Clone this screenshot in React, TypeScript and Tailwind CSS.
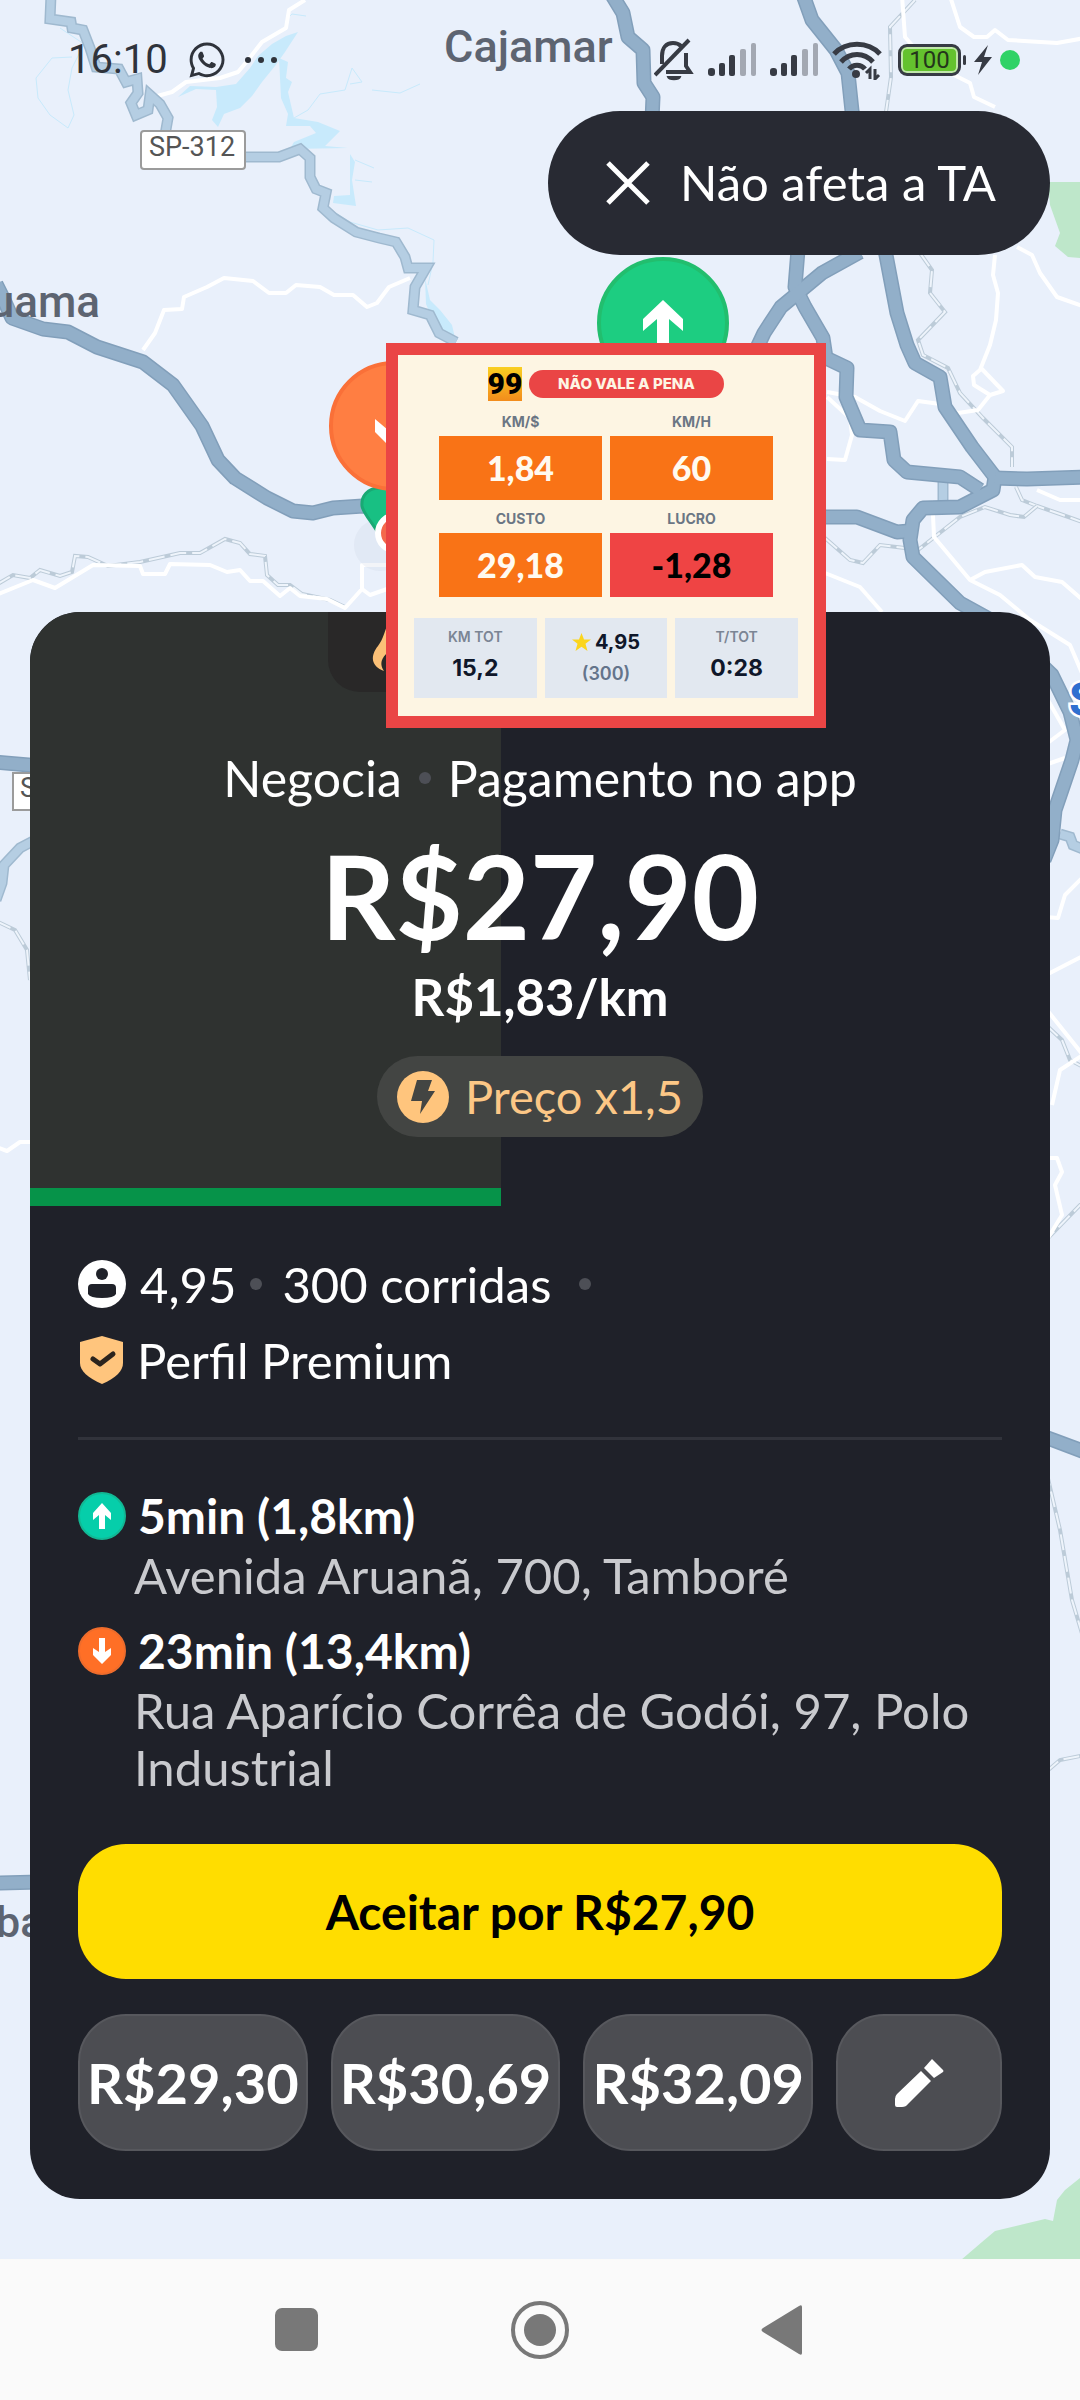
import type { ReactNode } from "react";
import { FaWhatsapp } from "react-icons/fa";

const mainRoads = [
  "M-4 284L4 300L12 318L43 329L68 332L97 347L143 362L173 385L202 426L218 460L235 478L267 498L293 511L313 513L333 508L363 506L600 512L827 517L857 517L897 532L910 531",
  "M612 -5L623 13L628 37L643 50L644 83L653 97L652 120",
  "M802 -8L812 20L836 50L848 73L852 111L886 255L897 313L907 345L915 363L940 377L945 407L972 447L995 477L993 490L960 507L923 508L913 520L910 540L913 557L960 603L1000 625L1052 675L1070 712L1077 740L1072 760L1055 810L1052 840L1044 860",
  "M995 478L1027 479L1085 477",
  "M798 250L795 287L805 307L823 338L826 358L847 368L846 397L860 430L890 432L894 460L907 472L960 477L980 490",
  "M860 252L822 273L781 307L764 333L756 350",
  "M-5 762L40 766",
  "M-5 1883L40 1882",
  "M1045 1437L1085 1452",
];

const lightRoads = [
  "M51 -5L50 19L71 22L72 28L83 30L90 48L96 67L119 69L126 82L137 79L138 93L131 103L136 115L148 110L150 95L160 104L168 118L165 135",
  "M240 157L279 157L300 149L310 158L310 177L316 189L326 193L323 208L334 218L356 232L379 238L396 242L405 257L408 268L426 268L415 287L413 310L430 315L439 333L456 342",
  "M35 840L20 848L4 865L2 883L-4 900",
  "M1060 834L1070 837L1073 845L1085 850",
  "M943 482L943 504",
];

const whiteRoads = [
  "M305 0L289 10L286 28L262 42L248 60L238 72L220 78L186 82L172 92L150 98",
  "M410 278L389 287L377 303L367 307L353 295L334 295L320 287L296 285L286 293L269 293L253 281L224 278L207 287L184 297L182 309L164 310L155 333L143 350",
  "M-4 595L33 580L55 588L93 565L140 566L143 574L165 574L170 564L210 565L227 572L240 570L250 581L263 581L280 596L290 588L300 596L327 599L345 608L362 589L362 565L390 565",
  "M362 589L370 595L390 588",
  "M950 -4L960 27L974 37L987 37L995 30L1008 40L1057 43L1085 38",
  "M902 -4L905 37L925 60L950 73L970 83L974 97L995 107",
  "M995 255L993 275L998 293L996 320L990 345L980 370L973 376L974 385L990 395L1003 391L980 367",
  "M990 395L978 410L958 413L940 404L918 401L905 421L880 411L855 397L827 392",
  "M1017 247L1032 255L1040 273L1057 297L1085 307",
  "M827 397L850 418L852 435L845 460L827 459",
  "M933 515L934 537L970 580L1000 595L1030 620L1070 645L1085 680",
  "M970 580L985 572L1022 565L1035 577L1062 582L1085 602",
  "M825 573L860 587L882 612",
  "M1037 490L1060 500L1085 500",
  "M1045 695L1065 730L1045 745M1045 765L1065 758",
  "M1085 875L1065 895L1058 918L1045 917M1085 955L1048 974M1047 1010L1083 1055L1060 1070L1052 1105",
  "M1048 1158L1057 1158L1062 1172L1055 1185L1062 1215L1048 1238",
  "M-4 1147L7 1151L20 1142L34 1142",
];

const rails = [
  "M-4 585L13 575L30 578L40 570L60 576L72 572L75 556L88 557L108 566L140 562L180 553L200 553L225 539L240 543L250 554L265 556L267 575L278 585L290 585L302 594L330 600L345 607",
  "M915 0L890 27L891 77L886 112",
  "M920 253L932 270L930 293L945 312L918 340L923 355L948 368L960 393L983 418L1012 447L1012 467",
  "M1016 487L1022 500L1037 506L1060 514L1085 523",
  "M1037 506L1024 517L1010 515L985 507L960 517L918 550",
  "M825 538L850 560L863 563L880 545L905 548",
  "M-4 921L15 930L27 950L30 980",
  "M1046 1025L1062 1040L1070 1060L1085 1068",
  "M1085 1200L1046 1240",
  "M1046 1470L1060 1530L1072 1600L1084 1640",
  "M1046 1772L1060 1760L1085 1755",
];

function MapBackground() {
  return (
    <svg
      className="absolute inset-0 h-full w-full bg-[#e9f0fb]"
      viewBox="0 0 1080 2400"
      preserveAspectRatio="xMidYMin slice"
      fill="none"
      aria-hidden="true"
    >
      <g fill="#c8eafc">
        <path d="M298 32L286 36L272 44L258 56L250 68L236 84L216 87L190 86L178 97L196 89L216 90L217 107L212 120L218 127L224 114L240 108L252 96L262 82L275 66L285 52Z" />
        <path d="M279 58L288 62L286 78L292 82L288 92L294 118L318 122L340 131L325 146L348 148L290 149L294 142L316 133L310 126L286 126L288 114L281 98Z" />
        <path d="M350 154L355 162L352 180L356 206L333 203L334 196L350 195Z" />
        <path d="M425 278L430 300L440 310L452 325L456 342L444 336L432 318L426 304Z" />
      </g>
      <g stroke="#c8eafc" strokeWidth="1">
        <path d="M72 57L52 58L36 78L38 98L50 115L68 128L74 115L68 90L72 68L84 44L60 28" />
        <path d="M294 118L308 110L320 94L345 90L352 68L362 82L350 84M372 90L400 93L420 84" />
        <path d="M334 212L350 222L378 230L408 228L434 240L433 262L428 285" />
        <path d="M286 20L292 14L306 16M355 160L374 168M355 180L372 182" />
      </g>
      <path d="M1048 182L1080 182V258L1068 257L1055 246L1060 233L1050 205Z" fill="#bee7ca" />
      <path d="M961 2260L982 2242L995 2231L1020 2225L1045 2219L1053 2221L1057 2200L1065 2190L1080 2178V2260Z" fill="#bee7ca" />

      {rails.map((d) => (
        <g key={d}>
          <path d={d} stroke="#bccbd8" strokeWidth="4" />
          <path d={d} stroke="#eef4fb" strokeWidth="2" strokeDasharray="16 6" />
        </g>
      ))}
      {whiteRoads.map((d) => (
        <path key={d} d={d} stroke="#fff" strokeWidth="4" strokeLinejoin="round" />
      ))}
      {lightRoads.map((d) => (
        <g key={d}>
          <path d={d} stroke="#9fb9cf" strokeWidth="11" />
          <path d={d} stroke="#b5cee3" strokeWidth="8" />
        </g>
      ))}
      {mainRoads.map((d) => (
        <path key={d} d={d} stroke="#829fba" strokeWidth="15" strokeLinejoin="round" />
      ))}
      {mainRoads.map((d) => (
        <path key={d} d={d} stroke="#92afc9" strokeWidth="12" strokeLinejoin="round" />
      ))}

      <g fontFamily="Roboto, sans-serif" fill="#5d6471">
        <text x="444" y="62" fontSize="45" fontWeight="500">Cajamar</text>
        <text x="100" y="317" fontSize="44" fontWeight="500" textAnchor="end">uama</text>
        <text x="-4" y="1937" fontSize="43" fontWeight="500">ba</text>
        <rect x="141" y="131" width="104" height="38" rx="3" fill="#fff" stroke="#9b9b9b" strokeWidth="2" />
        <text x="149" y="156" fontSize="27" fill="#555">SP-312</text>
        <rect x="13" y="773" width="60" height="37" fill="#fff" stroke="#9b9b9b" strokeWidth="2" />
        <text x="20" y="797" fontSize="27" fill="#555">S</text>
        <text x="1069" y="716" fontSize="48" fontWeight="700" fill="#2f6fd0" stroke="#fff" strokeWidth="5" paintOrder="stroke">S</text>
      </g>

      {/* pickup / dropoff markers */}
      <circle cx="380" cy="545" r="26" fill="#cdd4e4" opacity=".25" />
      <path d="M379 488C368 488 361 496 362 506C363 513 372 522 380 536H400V488Z" fill="#18c083" stroke="#19a974" strokeWidth="3" />
      <circle cx="396" cy="533" r="18" fill="#f4694c" stroke="#fff" strokeWidth="6" />
      <circle cx="394" cy="426" r="63" fill="#ff7e42" stroke="#fa7038" strokeWidth="4" />
      <path d="M394 451L375 432V419L388 430V402H400V430L413 419V432Z" fill="#fff" />
      <circle cx="663" cy="323" r="64" fill="#1dcd81" stroke="#22be6e" strokeWidth="4" />
      <path d="M663 300L683 319V331L669 319V350H657V319L643 331V319Z" fill="#fff" />
    </svg>
  );
}

function SignalIcon() {
  return (
    <svg width="50" height="34" viewBox="0 0 50 34" aria-hidden="true">
      <g fill="#373b44">
        <rect x="0" y="25" width="7" height="8" rx="3" />
        <rect x="11" y="20" width="6" height="13" rx="2" />
        <rect x="21" y="12" width="6" height="21" rx="2" />
      </g>
      <g fill="#a3a8b2">
        <rect x="32" y="6" width="6" height="27" rx="2" />
        <rect x="43" y="0" width="5" height="33" rx="2" />
      </g>
    </svg>
  );
}

function StatusBar() {
  return (
    <header className="flex h-[111px] items-center justify-between pt-2 pr-[60px] pl-[68px] text-[#2f333b]">
      <div className="flex items-center">
        <span className="font-[Roboto,sans-serif] text-[40px] leading-none">16:10</span>
        <FaWhatsapp className="ml-[19px] size-[40px]" />
        <svg className="ml-[17px]" width="34" height="8" viewBox="0 0 34 8" fill="currentColor" aria-hidden="true">
          <circle cx="4" cy="4" r="3" />
          <circle cx="17" cy="4" r="3" />
          <circle cx="30" cy="4" r="3" />
        </svg>
      </div>
      <div className="flex items-center">
        <svg width="40" height="44" viewBox="0 0 40 44" fill="none" stroke="#373b44" strokeWidth="4" aria-hidden="true">
          <path d="M1 37L35 2" />
          <path d="M8 26V18C8 10 12 5 19 5C22 5 25 6 27 8M12 34H36L32 28V15" />
          <path d="M14 39H26C25 42 15 42 14 39Z" fill="#373b44" strokeWidth="2" />
        </svg>
        <div className="ml-3.5 flex gap-3">
          <SignalIcon />
          <SignalIcon />
        </div>
        <svg className="ml-3" width="50" height="40" viewBox="0 0 50 40" fill="none" stroke="#373b44" strokeWidth="5" aria-hidden="true">
          <path d="M2 14C14 1 36 1 48 14M9 22C18 12 32 12 41 22M17 29C21 24 29 24 33 29" />
          <circle cx="24" cy="34" r="4" fill="#373b44" stroke="none" />
          <path d="M38 39V29L34 33M43 29V39L47 35" strokeWidth="3" />
        </svg>
        <div className="ml-4 flex items-center">
          <div className="flex h-8 w-[63px] items-center justify-center rounded-[9px] border-3 border-[#373b44] bg-[#64c22e] font-[Roboto,sans-serif] text-[24px] leading-none text-[#23351b] ring-2 ring-white/60 ring-inset">
            100
          </div>
          <div className="ml-0.5 h-2.5 w-[3px] rounded-sm bg-[#373b44]" />
        </div>
        <svg className="ml-2" width="18" height="30" viewBox="0 0 18 30" fill="#373b44" aria-hidden="true">
          <path d="M14 0L0 17H8L4 30L18 12H10Z" />
        </svg>
        <span className="ml-2 size-5 rounded-full bg-[#2fd266]" />
      </div>
    </header>
  );
}

function Metric({ label, value, tone }: { label: string; value: string; tone: string }) {
  return (
    <div className="text-center">
      <div className="h-[29px] font-[Inter,sans-serif] text-[14px] leading-[29px] font-bold text-[#6b7684]">{label}</div>
      <div className={`h-16 text-[34px] leading-[64px] font-black ${tone}`}>{value}</div>
    </div>
  );
}

function VerdictOverlay() {
  return (
    <section className="absolute top-[343px] left-[386px] h-[385px] w-[440px] border-12 border-[#ea4545] bg-[#fdf5e3] pt-3">
      <div className="flex items-center justify-center gap-[7px]">
        <div className="flex size-[34px] items-center justify-center bg-linear-to-b from-[#f9cf22] to-[#f28c1c] font-[Roboto,sans-serif] text-[30px] leading-none font-black text-black">
          99
        </div>
        <div className="flex h-7 w-[195px] items-center justify-center rounded-full bg-[#ea4545] font-[Inter,sans-serif] text-[15px] font-extrabold text-[#fdf5e3]">
          NÃO VALE A PENA
        </div>
      </div>
      <div className="mx-auto mt-1.5 grid w-[334px] grid-cols-2 gap-x-2 gap-y-1">
        <Metric label="KM/$" value="1,84" tone="bg-[#f97316] text-[#fffaf0]" />
        <Metric label="KM/H" value="60" tone="bg-[#f97316] text-[#fffaf0]" />
        <Metric label="CUSTO" value="29,18" tone="bg-[#f97316] text-[#fffaf0]" />
        <Metric label="LUCRO" value="-1,28" tone="bg-[#ef4444] text-black" />
      </div>
      <div className="mx-4 mt-[21px] grid grid-cols-3 gap-2 text-center font-[Inter,sans-serif]">
        <div className="h-20 bg-[#e2e8f0] pt-2">
          <div className="text-[14px] leading-[22px] font-semibold text-[#7b8594]">KM TOT</div>
          <div className="text-[23px] leading-[40px] font-bold text-[#0f172a]">15,2</div>
        </div>
        <div className="h-20 bg-[#e2e8f0] pt-2">
          <div className="flex items-center justify-center gap-1 text-[20px] leading-[32px] font-bold text-[#0f172a]">
            <svg width="19" height="18" viewBox="0 0 19 18" fill="#fbd51c" aria-hidden="true">
              <path d="M9.500 0L12 6.500H19L13.500 10.800L15.500 18L9.500 13.800L3.500 18L5.500 10.800L0 6.500H7Z" />
            </svg>
            4,95
          </div>
          <div className="text-[18px] leading-[32px] font-semibold text-[#64748b]">(300)</div>
        </div>
        <div className="h-20 bg-[#e2e8f0] pt-2">
          <div className="text-[14px] leading-[22px] font-semibold text-[#7b8594]">T/TOT</div>
          <div className="text-[23px] leading-[40px] font-bold text-[#0f172a]">0:28</div>
        </div>
      </div>
    </section>
  );
}

function Dot() {
  return <span className="size-3 shrink-0 rounded-full bg-[#4d4f56]" />;
}

function StopIcon({ up }: { up?: boolean }) {
  return (
    <svg className="size-12 shrink-0" viewBox="0 0 48 48" aria-hidden="true">
      <circle cx="24" cy="24" r="23" fill={up ? "#06ceaa" : "#ff6f26"} stroke={up ? "#12b894" : "#ee6c2c"} strokeWidth="2" />
      <path
        d={up ? "M24 11L33 21V28L27 23V37H21V23L15 28V21Z" : "M24 37L33 28V21L27 25V11H21V25L15 21V28Z"}
        fill="#fff"
      />
    </svg>
  );
}

function Stop({ icon, title, address }: { icon: ReactNode; title: string; address: string }) {
  return (
    <div>
      <div className="flex h-14 items-center gap-3">
        {icon}
        <span className="text-[48px] leading-none font-bold">{title}</span>
      </div>
      <p className="mt-[3px] pl-14 text-[49px] leading-[57px] text-[#c9cace]">{address}</p>
    </div>
  );
}

const timerPercent = 46.2;
const counterOffers = ["R$29,30", "R$30,69", "R$32,09"];

function OfferCard() {
  return (
    <main className="relative mx-[30px] mt-[357px] overflow-hidden rounded-[50px] bg-[#1f2129] text-white">
      <section className="relative">
        <div
          className="absolute inset-y-0 left-0 border-b-18 border-[#069349] bg-[#2f3230]"
          style={{ width: `${timerPercent}%` }}
        />
        <div className="absolute top-0 left-[298px] h-20 w-[424px] rounded-b-[32px] bg-[#292828]">
          <svg className="mt-1 ml-[42px]" width="40" height="58" viewBox="0 0 40 58" fill="#fbc077" aria-hidden="true">
            <path d="M20 2C14 16 14 22 8 30C0 40 1 50 14 55C8 46 14 40 18 36C24 44 28 50 24 56C36 52 40 42 36 32C32 22 22 16 20 2Z" />
          </svg>
        </div>
        <div className="relative flex flex-col items-center pt-[137px] pb-[69px]">
          <div className="flex items-center gap-[17px] text-[50px] leading-[58px]">
            <span>Negocia</span>
            <Dot />
            <span>Pagamento no app</span>
          </div>
          <div className="mt-[31px] text-[116px] leading-[116px] font-bold">R$27,90</div>
          <div className="mt-[13px] text-[51px] leading-[60px] font-bold">R$1,83/km</div>
          <div className="mt-[29px] flex h-[81px] items-center gap-4 rounded-full bg-[#434543] px-5 text-[47px] leading-none text-[#fcc786]">
            <svg className="size-[52px]" viewBox="0 0 52 52" aria-hidden="true">
              <circle cx="26" cy="26" r="26" fill="#ffc57d" />
              <path d="M20 9H35L31 20H38L23 43L25 30H14Z" fill="#434543" />
            </svg>
            Preço x1,5
          </div>
        </div>
      </section>

      <div className="px-12 pt-[50px] pb-12">
        <div className="flex h-14 items-center text-[49px] leading-none">
          <svg className="mr-3.5 size-12" viewBox="0 0 48 48" aria-hidden="true">
            <circle cx="24" cy="24" r="24" fill="#fff" />
            <circle cx="24" cy="14" r="6" fill="#1f2129" />
            <path d="M14 24H34Q38 24 38 28V34Q36 38 24 38Q12 38 10 34V28Q10 24 14 24Z" fill="#1f2129" />
          </svg>
          <span className="mr-3.5">4,95</span>
          <Dot />
          <span className="mr-7 ml-5">300 corridas</span>
          <Dot />
        </div>
        <div className="mt-5 flex h-14 items-center gap-[11px] text-[49px] leading-none">
          <svg className="size-12" viewBox="0 0 48 48" fill="none" aria-hidden="true">
            <path d="M24 0L45 6V27C45 35 38 42 24 48C10 42 2 35 2 27V6Z" fill="#ffc57d" />
            <path d="M15 23L22 28L35 18" stroke="#2b241d" strokeWidth="5" strokeLinecap="round" strokeLinejoin="round" />
          </svg>
          Perfil Premium
        </div>

        <hr className="mt-[49px] border-t-3 border-[#31333b]" />

        <div className="mt-12 flex flex-col gap-[19px]">
          <Stop icon={<StopIcon up />} title="5min (1,8km)" address="Avenida Aruanã, 700, Tamboré" />
          <Stop icon={<StopIcon />} title="23min (13,4km)" address="Rua Aparício Corrêa de Godói, 97, Polo Industrial" />
        </div>

        <button type="button" className="mt-12 h-[135px] w-full rounded-[48px] bg-[#ffdd00] text-[48px] font-bold text-black">
          Aceitar por R$27,90
        </button>
        <div className="mt-[35px] grid grid-cols-[230fr_230fr_230fr_166fr] gap-[23px]">
          {counterOffers.map((price) => (
            <button
              key={price}
              type="button"
              className="h-[137px] min-w-0 rounded-[48px] border-2 border-[#57585d] bg-[#4c4d52] text-[56px] font-bold"
            >
              {price}
            </button>
          ))}
          <button
            type="button"
            aria-label="Editar valor"
            className="flex h-[137px] min-w-0 items-center justify-center rounded-[48px] border-2 border-[#57585d] bg-[#4c4d52]"
          >
            <svg width="50" height="50" viewBox="0 0 50 50" fill="#fff" aria-hidden="true">
              <path d="M27 13L37 23L14 46Q12 49 8 49H3Q1 49 1 47V41Q1 38 3 36Z" />
              <path d="M30 10L38 1L49 12Q50 13 49 14L40 20Z" />
            </svg>
          </button>
        </div>
      </div>
    </main>
  );
}

function NavBar() {
  return (
    <nav className="relative mt-auto flex h-[141px] items-center justify-center gap-[185px] bg-[#fafafa]">
      <button type="button" aria-label="Recentes">
        <svg width="56" height="60" viewBox="0 0 56 60" fill="#787878">
          <rect x="6" y="8" width="43" height="43" rx="7" />
        </svg>
      </button>
      <button type="button" aria-label="Início">
        <svg width="60" height="60" viewBox="0 0 60 60" fill="#787878">
          <circle cx="30" cy="30" r="27" fill="none" stroke="#787878" strokeWidth="4" />
          <circle cx="30" cy="30" r="16" />
        </svg>
      </button>
      <button type="button" aria-label="Voltar">
        <svg width="56" height="60" viewBox="0 0 56 60" fill="#787878">
          <path d="M47 7V53Q47 56 44 54L8 32Q5 30 8 28L44 6Q47 4 47 7Z" />
        </svg>
      </button>
    </nav>
  );
}

export default function App() {
  return (
    <div className="relative flex min-h-screen flex-col overflow-hidden font-[Lato,sans-serif]">
      <MapBackground />
      <div className="relative">
        <StatusBar />
        <div className="flex justify-end pr-[30px]">
          <button
            type="button"
            className="flex h-36 items-center gap-[30px] rounded-full bg-[#282a33] pr-[54px] pl-[58px] text-[49px] text-white"
          >
            <svg width="44" height="44" viewBox="0 0 44 44" stroke="#fff" strokeWidth="5" aria-hidden="true">
              <path d="M2 2L42 42M42 2L2 42" />
            </svg>
            Não afeta a TA
          </button>
        </div>
      </div>
      <OfferCard />
      <VerdictOverlay />
      <NavBar />
    </div>
  );
}
